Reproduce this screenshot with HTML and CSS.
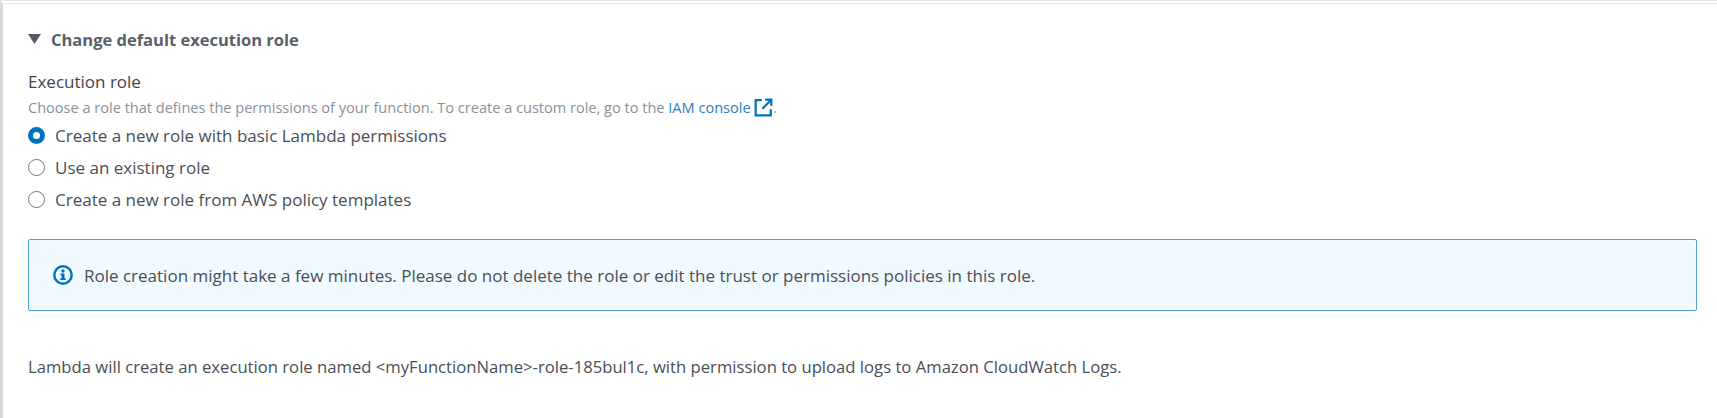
FILE: index.html
```html
<!DOCTYPE html>
<html lang="en">
<head>
  <meta charset="UTF-8">
  <title>Change default execution role</title>
  <link rel="stylesheet" href="styles.css">
</head>
<body>

<div class="panel">
  <!-- Expander heading -->
  <div class="expander">
    <svg class="caret" width="13" height="10" viewBox="0 0 13 10"><path d="M0 0h13L6.500 10z" fill="#545b64"/></svg>
    <span>Change default execution role</span>
  </div>

  <div class="field-label">Execution role</div>
  <div class="field-desc">
    Choose a role that defines the permissions of your function. To create a custom role, go to the
    <a href="#" class="link">IAM console</a>
    <svg class="ext" width="19" height="19" viewBox="0 0 17 17" fill="none" stroke="#0073bb" stroke-width="2"><path d="M7 2H1.500v13.500H15V10"/><path d="M10 1.500h5.500V7M15.500 1.500L7.500 9.500"/></svg>.
  </div>

  <div class="radios">
    <label class="radio"><span class="dot checked"></span>Create a new role with basic Lambda permissions</label>
    <label class="radio"><span class="dot"></span>Use an existing role</label>
    <label class="radio"><span class="dot"></span>Create a new role from AWS policy templates</label>
  </div>

  <div class="alert">
    <svg class="info" width="20" height="20" viewBox="0 0 20 20"><circle cx="10" cy="10" r="8.700" fill="none" stroke="#0073bb" stroke-width="2.400"/><circle cx="10" cy="6" r="1.700" fill="#0073bb"/><path d="M7.500 8.500h4v4.700h1.200v1.800H7.300v-1.800h1.300v-2.900H7.500z" fill="#0073bb"/></svg>
    <span>Role creation might take a few minutes. Please do not delete the role or edit the trust or permissions policies in this role.</span>
  </div>

  <p class="note">Lambda will create an execution role named &lt;myFunctionName&gt;-role-185bul1c, with permission to upload logs to Amazon CloudWatch Logs.</p>
</div>

</body>
</html>
```

FILE: styles.css
```css
* {
  margin: 0;
  padding: 0;
  box-sizing: border-box;
}

html, body {
  height: 100%;
  overflow: hidden;
}

body {
  font-family: "Open Sans", Arial, sans-serif;
  font-size: 16.67px;
  color: #4a4f57;
  background-color: #fff;
}

.panel {
  height: 100%;
  padding: 26px 20px 0 25px;
  border-top: 4px double #e6e6e6;
  border-left: 3px solid #d9d9d9;
}

/* Expander heading */
.expander {
  display: flex;
  align-items: center;
  gap: 10px;
  height: 18px;
  font-weight: 700;
  font-size: 16.5px;
  color: #5a6069;
}

.field-label {
  margin-top: 23px;
  font-size: 17px;
  line-height: 22px;
  color: #3f444b;
}

.field-desc {
  margin-top: 4px;
  font-size: 14.55px;
  line-height: 20px;
  color: #8a9099;
}

.link {
  color: #1f83c4;
  text-decoration: none;
}

.ext {
  vertical-align: -4px;
}

/* Radio group */
.radios {
  margin-top: 2px;
}

.radio {
  display: flex;
  align-items: center;
  gap: 10px;
  height: 32px;
  font-size: 17px;
}

.dot {
  width: 17px;
  height: 17px;
  border: 1.500px solid #70757c;
  border-radius: 50%;
  background-color: #fff;
}

.dot.checked {
  border: 5.500px solid #0073bb;
}

/* Info alert */
.alert {
  display: flex;
  align-items: center;
  gap: 11px;
  height: 72px;
  margin-top: 24px;
  padding-left: 24px;
  font-size: 17px;
  background-color: #f1faff;
  border: 1.500px solid #4f9fd8;
  border-radius: 2px;
}

.note {
  margin-top: 44px;
  line-height: 24px;
}
```
